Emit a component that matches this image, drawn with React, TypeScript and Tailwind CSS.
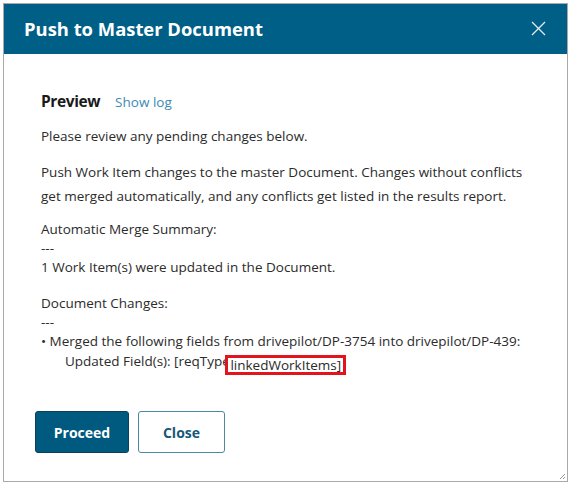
import React from 'react';

const font = { fontFamily: '"Open Sans", "Noto Sans", Arial, sans-serif' };

const App = () => {
  return (
    <div className="w-[571px] h-[485px] bg-white pt-[3px] pl-[3px]" style={font}>
      <div className="relative w-[565px] h-[479px] border border-[#a9a9a9] flex flex-col">
        {/* Header */}
        <div className="h-[50px] bg-[#005f87] flex items-center justify-between pl-[20px] pr-[21px]">
          <h1 className="text-[18.4px] font-bold text-white">Push to Master Document</h1>
          <svg width="15" height="15" viewBox="0 0 15 15" className="mt-[-2px]">
            <path d="M1 1 L14 14 M14 1 L1 14" stroke="#e3ecf1" strokeWidth="1.3" />
          </svg>
        </div>

        {/* Body */}
        <div className="flex-1 pl-[37px] pr-[40px] pt-[36px] text-[13.5px] text-[#2b2b2b]">
          <div className="flex items-baseline gap-[15px]">
            <span className="text-[15.5px] font-bold text-[#1a1a1a] tracking-[-0.4px]">Preview</span>
            <a className="text-[13.5px] text-[#3b8ab5]">Show log</a>
          </div>
          <p className="mt-[11px] leading-[24px]">Please review any pending changes below.</p>
          <p className="mt-[12px] leading-[24px]">
            Push Work Item changes to the master Document. Changes without conflicts get merged automatically, and any conflicts get listed in the results report.
          </p>
          <div className="mt-[12px] leading-[19px]">
            <div>Automatic Merge Summary:</div>
            <div>---</div>
            <div>1 Work Item(s) were updated in the Document.</div>
          </div>
          <div className="mt-[17px] leading-[19px]">
            <div>Document Changes:</div>
            <div>---</div>
            <div>• Merged the following fields from drivepilot/DP-3754 into drivepilot/DP-439:</div>
            <div className="pl-[24px] mt-[1px]">
              Updated Field(s): [reqType,
              <span className="inline-block align-[-4px] leading-[14px] ml-[-8px] px-[2px] bg-white border-[3px] border-[#e3141b]">linkedWorkItems]</span>
            </div>
          </div>
        </div>

        {/* Footer */}
        <div className="flex gap-[9px] pl-[31px] pb-[28px]">
          <button className="w-[94px] h-[42px] rounded-[3px] bg-[#005a80] border border-[#0d3f57] text-white text-[14px] font-bold">Proceed</button>
          <button className="w-[87px] h-[42px] rounded-[3px] bg-white border border-[#4d88a6] text-[#17587a] text-[14px] font-bold">Close</button>
        </div>

        <svg className="absolute right-[1px] bottom-[1px]" width="7" height="7" viewBox="0 0 7 7">
          <path d="M6 1 L1 6 M6 4 L4 6" stroke="#9a9a9a" strokeWidth="1" />
        </svg>
      </div>
    </div>
  );
};

export default App;
